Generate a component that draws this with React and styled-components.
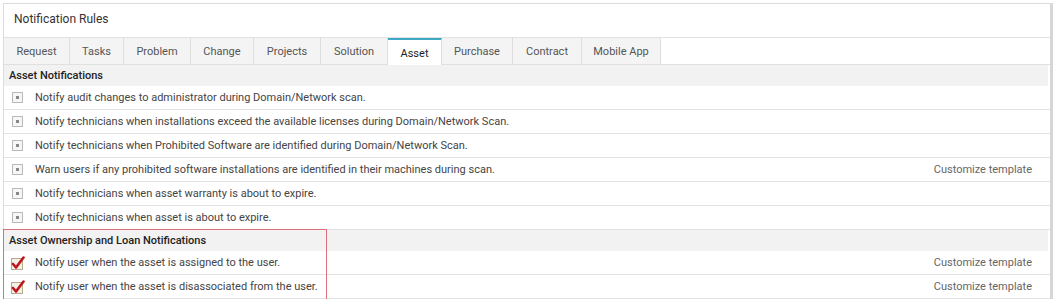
import styled, { createGlobalStyle } from 'styled-components';

const Global = createGlobalStyle`
  body {
    margin: 0;
    background: #fff;
    font-family: Roboto, "Liberation Sans", Arial, sans-serif;
  }
`;

const Panel = styled.div`
  margin: 3px 0 0 3px;
  width: 1050px;
  border: 1px solid #dcdcdc;
  border-bottom: 0;
  border-right: 3px solid #d6d6d6;
  box-sizing: border-box;
`;

const Title = styled.div`
  height: 34px;
  padding: 0 0 4px 10px;
  box-sizing: border-box;
  display: flex;
  align-items: center;
  font-size: 12px;
  color: #333;
  border-bottom: 1px solid #e2e2e2;
`;

const TabBar = styled.div`
  display: flex;
  height: 26px;
  border-bottom: 1px solid #e0e0e0;
`;

const Tab = styled.div`
  width: ${(p) => p.$w}px;
  box-sizing: border-box;
  display: flex;
  align-items: center;
  justify-content: center;
  font-size: 11px;
  color: ${(p) => (p.$active ? '#222' : '#555')};
  background: ${(p) => (p.$active ? '#fff' : '#f4f4f4')};
  border-right: 1px solid #dedede;
  border-top: ${(p) => (p.$active ? '2px solid #3fa9c6' : '0')};
  margin-bottom: ${(p) => (p.$active ? '-1px' : '0')};
  padding-top: ${(p) => (p.$active ? '2px' : '0')};
`;

const Section = styled.div`
  position: relative;
`;

const Highlight = styled.div`
  position: absolute;
  left: -1px;
  top: -1px;
  width: 322px;
  height: 70px;
  border: 1px solid #d9707c;
  pointer-events: none;
`;

const Header = styled.div`
  height: 21px;
  background: #f2f2f2;
  display: flex;
  align-items: center;
  padding-left: 5px;
  font-size: 11px;
  font-weight: 500;
  color: #222;
  margin-right: 2px;
`;

const Row = styled.div`
  height: 24px;
  display: flex;
  align-items: center;
  border-bottom: 1px solid #e3e3e3;
  box-sizing: border-box;
  padding: 0 18px 0 7px;
  font-size: 11px;
  color: #444;
`;

const Box = styled.span`
  width: 11px;
  height: 11px;
  box-sizing: border-box;
  border: 1px solid #b9b9b9;
  background: #f6f6f6;
  display: flex;
  align-items: center;
  justify-content: center;
  margin-right: 12px;
  margin-left: 1px;
  &::after {
    content: '';
    width: 3px;
    height: 3px;
    background: #888;
  }
`;

const CheckWrap = styled.span`
  width: 14px;
  height: 14px;
  margin-right: 10px;
  display: flex;
`;

const Label = styled.span`
  flex: 1;
`;

const Link = styled.span`
  color: #666;
  font-size: 11px;
`;

const Checked = () => (
  <CheckWrap>
    <svg width="14" height="14" viewBox="0 0 14 14">
      <rect x="0.5" y="2.5" width="11" height="11" fill="#f3f0e8" stroke="#b8a98a" />
      <path d="M2 8 L5 11.5 L12.5 1.5" fill="none" stroke="#c0141c" strokeWidth="2.6" strokeLinecap="round" strokeLinejoin="round" />
    </svg>
  </CheckWrap>
);

const tabs = [
  ['Request', 66],
  ['Tasks', 54],
  ['Problem', 67],
  ['Change', 63],
  ['Projects', 67],
  ['Solution', 67],
  ['Asset', 54],
  ['Purchase', 71],
  ['Contract', 69],
  ['Mobile App', 79],
];

const assetRows = [
  ['Notify audit changes to administrator during Domain/Network scan.'],
  ['Notify technicians when installations exceed the available licenses during Domain/Network Scan.'],
  ['Notify technicians when Prohibited Software are identified during Domain/Network Scan.'],
  ['Warn users if any prohibited software installations are identified in their machines during scan.', true],
  ['Notify technicians when asset warranty is about to expire.'],
  ['Notify technicians when asset is about to expire.'],
];

const loanRows = [
  'Notify user when the asset is assigned to the user.',
  'Notify user when the asset is disassociated from the user.',
];

const App = () => (
  <>
    <Global />
    <Panel>
      <Title>Notification Rules</Title>
      <TabBar>
        {tabs.map(([name, w]) => (
          <Tab key={name} $w={w} $active={name === 'Asset'}>
            {name}
          </Tab>
        ))}
      </TabBar>
      <Section>
        <Header>Asset Notifications</Header>
        {assetRows.map(([text, custom]) => (
          <Row key={text}>
            <Box />
            <Label>{text}</Label>
            {custom && <Link>Customize template</Link>}
          </Row>
        ))}
      </Section>
      <Section>
        <Header>Asset Ownership and Loan Notifications</Header>
        {loanRows.map((text) => (
          <Row key={text}>
            <Checked />
            <Label>{text}</Label>
            <Link>Customize template</Link>
          </Row>
        ))}
        <Highlight />
      </Section>
    </Panel>
  </>
);

export default App;
